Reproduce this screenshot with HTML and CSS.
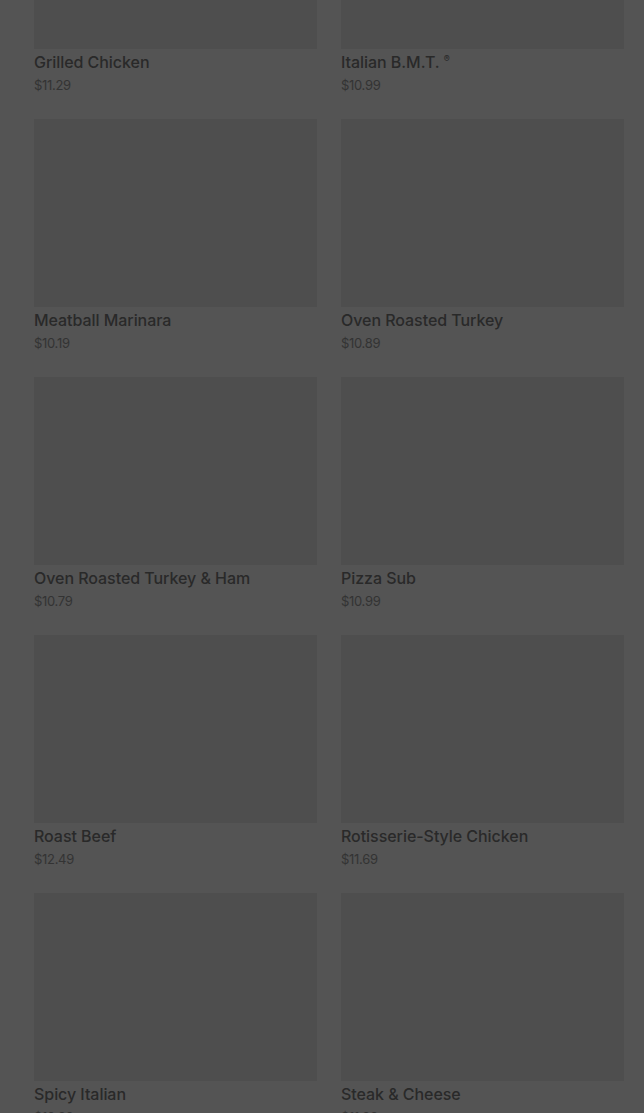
FILE: index.html
```html
<!DOCTYPE html>
<html lang="en">
<head>
  <meta charset="UTF-8"/>
  <meta name="viewport" content="width=device-width, initial-scale=1.0"/>
  <title>Menu</title>
  <link rel="stylesheet" href="styles.css">
</head>
<body>

<div class="menu">
  <div class="item">
    <div class="photo"></div>
    <div class="name">Grilled Chicken</div>
    <div class="price">$11.29</div>
  </div>
  <div class="item">
    <div class="photo"></div>
    <div class="name">Italian B.M.T. <sup>®</sup></div>
    <div class="price">$10.99</div>
  </div>
  <div class="item">
    <div class="photo"></div>
    <div class="name">Meatball Marinara</div>
    <div class="price">$10.19</div>
  </div>
  <div class="item">
    <div class="photo"></div>
    <div class="name">Oven Roasted Turkey</div>
    <div class="price">$10.89</div>
  </div>
  <div class="item">
    <div class="photo"></div>
    <div class="name">Oven Roasted Turkey &amp; Ham</div>
    <div class="price">$10.79</div>
  </div>
  <div class="item">
    <div class="photo"></div>
    <div class="name">Pizza Sub</div>
    <div class="price">$10.99</div>
  </div>
  <div class="item">
    <div class="photo"></div>
    <div class="name">Roast Beef</div>
    <div class="price">$12.49</div>
  </div>
  <div class="item">
    <div class="photo"></div>
    <div class="name">Rotisserie-Style Chicken</div>
    <div class="price">$11.69</div>
  </div>
  <div class="item">
    <div class="photo"></div>
    <div class="name">Spicy Italian</div>
    <div class="price">$10.99</div>
  </div>
  <div class="item">
    <div class="photo"></div>
    <div class="name">Steak &amp; Cheese</div>
    <div class="price">$11.99</div>
  </div>
</div>

</body>
</html>
```

FILE: styles.css
```css
html, body {
  margin: 0;
  padding: 0;
  background: #545454;
  overflow: hidden;
  height: 1113px;
}
body {
  font-family: Inter, "Liberation Sans", sans-serif;
  color: #292929;
}
.menu {
  display: grid;
  grid-template-columns: 283px 283px;
  column-gap: 24px;
  row-gap: 24px;
  padding: 0 20px 0 34px;
  margin-top: -139px;
}
.photo {
  height: 188px;
  background: #4e4e4e;
}
.name {
  margin-top: 2px;
  font-size: 16px;
  font-weight: 500;
  line-height: 22px;
  letter-spacing: -0.05px;
}
.name sup {
  font-size: 9px;
  vertical-align: 6px;
  line-height: 0;
}
.price {
  margin-top: 2px;
  font-size: 13px;
  line-height: 20px;
  color: #333;
  letter-spacing: -0.3px;
}
```
